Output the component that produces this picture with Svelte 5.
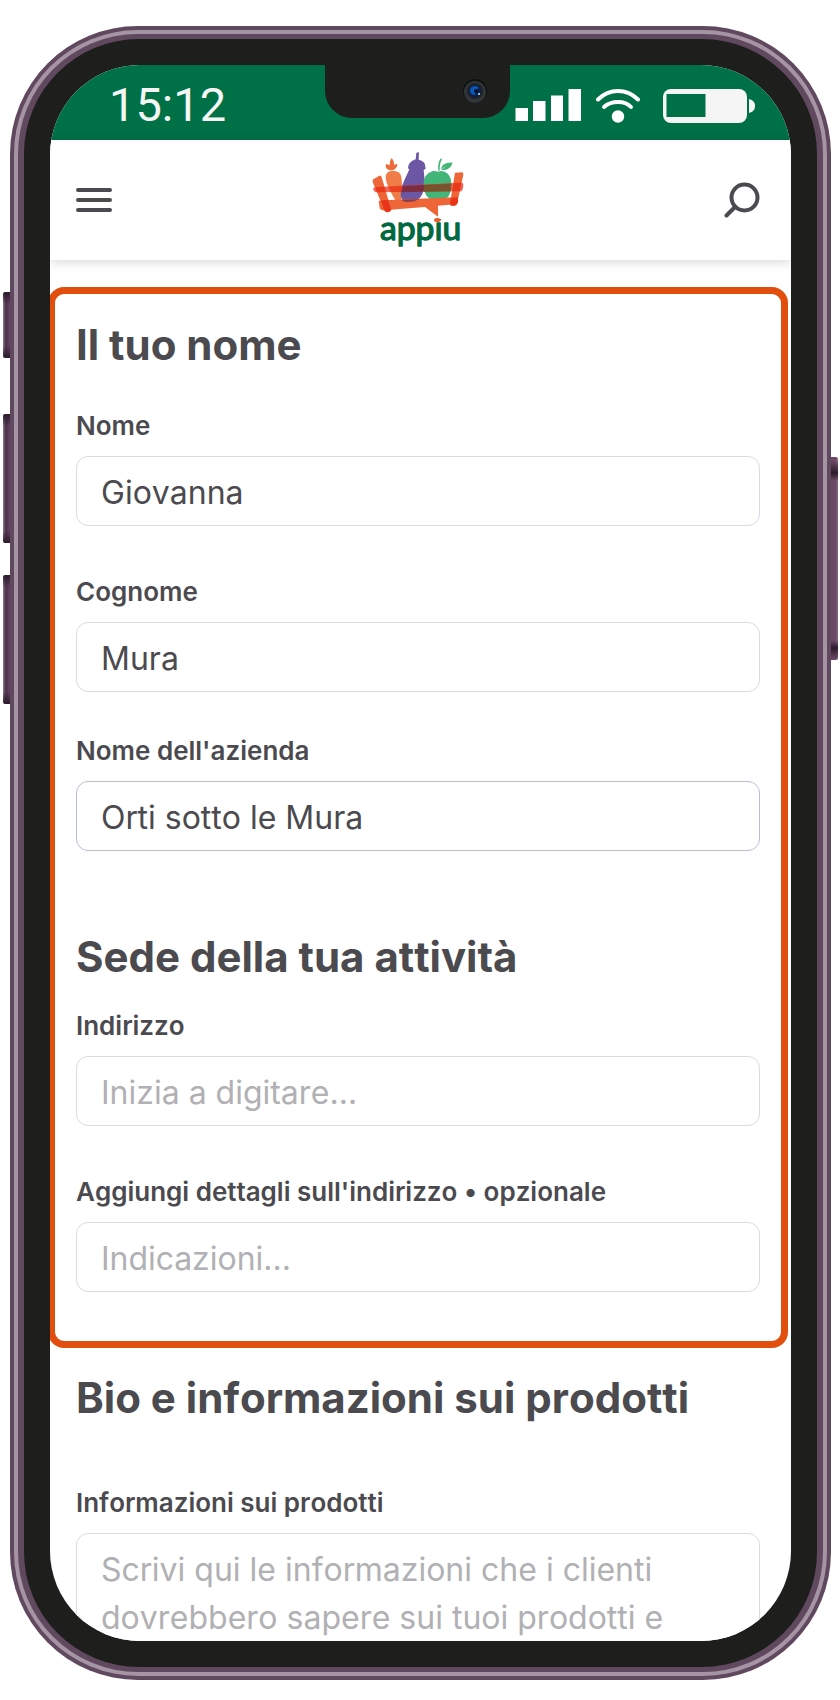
<script>
  let nome = $state('Giovanna');
  let cognome = $state('Mura');
  let azienda = $state('Orti sotto le Mura');
  let indirizzo = $state('');
  let dettagli = $state('');
  let info = $state('');
</script>

<div class="page">
  <div class="phone">
    <span class="key key-mute"></span>
    <span class="key key-up"></span>
    <span class="key key-down"></span>
    <span class="key key-power"></span>
    <div class="rim">
      <div class="edge">
        <div class="bezel">
          <div class="screen">
            <div class="status">
              <span class="time">15:12</span>
              <div class="notch">
                <svg class="camera" width="24" height="24" viewBox="0 0 24 24" aria-hidden="true">
                  <circle cx="12" cy="12" r="12" fill="#0e0f11" />
                  <circle cx="12" cy="13" r="11" fill="#323537" />
                  <circle cx="12" cy="12" r="8" fill="#202326" />
                  <circle cx="12" cy="12" r="6" fill="#06204f" />
                  <path d="M7 12a5 5 0 0 1 9-3l-3 2-1 5a5 5 0 0 1-5-4z" fill="#0b57b5" />
                  <circle cx="13" cy="12" r="2" fill="#051023" />
                  <circle cx="16" cy="15" r="1" fill="#d6e6ff" />
                </svg>
              </div>
              <svg class="signal" width="66" height="34" viewBox="0 0 66 34" aria-hidden="true">
                <path d="M.5 19h12.500v13H.5zM18 12h12.500v20H18zM36 6.500h12v25.500H36zM53.500 0H66v32H53.500z" fill="#fff" />
              </svg>
              <svg class="wifi" width="44" height="34" viewBox="0 0 44 34" aria-hidden="true">
                <g fill="none" stroke="#fff" stroke-width="4" stroke-linecap="round">
                  <path d="M2 10.500Q10.500 2 22 2t20 8.500" />
                  <path d="M8 18q5.500-5 14-5t13 5" />
                </g>
                <circle cx="22" cy="27.500" r="6.200" fill="#fff" />
              </svg>
              <svg class="battery" width="92" height="34" viewBox="0 0 92 34" aria-hidden="true">
                <rect width="84" height="34" rx="8" fill="#f5f5f5" />
                <path d="M3.500 5h39v23h-39z" fill="#007047" />
                <path d="M86 10q6 1.500 6 7t-6 7z" fill="#f5f5f5" />
              </svg>
            </div>

            <header>
              <button class="icon" aria-label="Menu">
                <svg width="36" height="36" viewBox="0 0 36 36">
                  <path d="M2 8h32M2 18h32M2 28h32" stroke="#4b4a4f" stroke-width="4" stroke-linecap="round" />
                </svg>
              </button>
              <a class="logo" href="#home">
                <svg width="96" height="100" viewBox="60 30 288 300">
                  <!-- carrot -->
                  <path d="M107 112q0-19 21-20 23 0 26 18 4 24-1 76-3 14-8 7-16-20-28-48-10-20-10-33z" fill="#f07d47" />
                  <path d="M124 91q-17-2-17-14-2-5 5-4l8 3q-3-10 5-22 9 12 7 22l7-4q5-1 3 3-3 13-15 16z" fill="#ec6b3b" />
                  <!-- aubergine -->
                  <path d="M199 38l8-1-1 22q17 4 19 15l2 12-6 4q5 28 1 54-6 42-46 42-26-1-24-27 4-27 15-47 7-14 11-24l-4-3q0-20 23-27z" fill="#6c57a5" />
                  <!-- apple -->
                  <path d="M264 95q16-6 29 6 12 11 11 36-1 45-41 46-39-2-43-46 1-38 29-44 9-1 15 2z" fill="#43b578" />
                  <path d="M265 92q-3-24 8-37l3 3q-8 14-7 34z" fill="#43b578" />
                  <path d="M272 89q4-23 36-21-8 25-34 22l14-13z" fill="#43b578" />
                  <text x="90" y="299">appiu</text>
                  <path d="M252 214h26v24h-26z" fill="#fff" />
                  <!-- crate -->
                  <path d="M70 118l18-11q5-1 7 5l29 97q-5 9-16 7-4-2-6-8L68 126q-1-5 2-8zM315 98l20-1q6 0 5 7l-19 88q-3 6-10 5-11 1-11-6l14-87z" fill="#ee6637" />
                  <path d="M86 183q7-3 16-2l210-9q11-1 12 5 3 9-3 15l-57 5v33l-39-29-122 10q-10 1-14-6z" fill="#ee6637" />
                  <path d="M69 146q2-5 13-5l245-13q11-1 13 4 1 13-5 22L82 157q-10 0-13-11z" fill="#e72810" opacity=".7" />
                  <path d="M159 138l65-3q-1 10-3 20l-67 2z" fill="#6c2b43" opacity=".8" />
                  <path d="M222 135l82-4-3 23-79 1z" fill="#70542f" opacity=".9" />
                  <path d="M93 181l21-1 10 30q-5 9-16 6-5-3-7-9zM303 174l21-2q1 12-3 20-3 6-13 5-10 0-8-7z" fill="#e72410" opacity=".75" />
                  <path d="M154 179l53-2q-12 9-32 9-15 0-21-7z" fill="#713451" opacity=".8" />
                  <ellipse cx="262" cy="240" rx="10" ry="6" fill="#ea5b27" />
                </svg>
              </a>
              <button class="icon" aria-label="Cerca">
                <svg width="36" height="36" viewBox="0 0 36 36">
                  <circle cx="20.500" cy="15.500" r="13" fill="none" stroke="#4b4a4f" stroke-width="4" />
                  <path d="M11 25l-8.500 8.500" stroke="#4b4a4f" stroke-width="4" stroke-linecap="round" />
                </svg>
              </button>
            </header>

            <form>
              <section class="highlight">
                <h2>Il tuo nome</h2>
                <div class="field first">
                  <label for="nome">Nome</label>
                  <input id="nome" type="text" bind:value={nome} />
                </div>
                <div class="field">
                  <label for="cognome">Cognome</label>
                  <input id="cognome" type="text" bind:value={cognome} />
                </div>
                <div class="field company">
                  <label for="azienda">Nome dell'azienda</label>
                  <input id="azienda" class="active" type="text" bind:value={azienda} />
                </div>

                <h2 class="next">Sede della tua attività</h2>
                <div class="field address">
                  <label for="indirizzo">Indirizzo</label>
                  <input id="indirizzo" type="text" placeholder="Inizia a digitare..." bind:value={indirizzo} />
                </div>
                <div class="field">
                  <label for="dettagli">Aggiungi dettagli sull'indirizzo • opzionale</label>
                  <input id="dettagli" type="text" placeholder="Indicazioni..." bind:value={dettagli} />
                </div>
              </section>

              <section class="bio">
                <h2>Bio e informazioni sui prodotti</h2>
                <div class="field">
                  <label for="info">Informazioni sui prodotti</label>
                  <textarea id="info" rows="4" placeholder="Scrivi qui le informazioni che i clienti dovrebbero sapere sui tuoi prodotti e" bind:value={info}></textarea>
                </div>
              </section>
            </form>
          </div>
        </div>
      </div>
    </div>
  </div>
</div>

<style>
  :global(body) {
    background: #fff;
    font-family: Inter, sans-serif;
    font-kerning: none;
    font-feature-settings: 'calt' 0, 'liga' 0, 'ccmp' 0;
    color: #4b4a4f;
  }

  .page {
    box-sizing: border-box;
    height: 100vh;
    padding: 26px 9px 20px 10px;
  }

  .phone,
  .rim,
  .edge,
  .bezel,
  .screen {
    box-sizing: border-box;
    height: 100%;
  }

  .phone {
    position: relative;
    padding: 4px;
    border-radius: 128px;
    background: #60485f;
  }

  .rim {
    padding: 4px;
    border-radius: 124px;
    background: #a594a3;
  }

  .edge {
    padding: 5px 6px;
    border-radius: 120px;
    background: #60485f;
  }

  .bezel {
    padding: 26px;
    border-radius: 115px;
    background: #1e1e1c;
  }

  .screen {
    position: relative;
    overflow: hidden;
    border-radius: 90px;
    background: #fff;
  }

  /* hardware keys on the sides */
  .key {
    position: absolute;
    left: -7px;
    width: 7px;
    border-radius: 2px 0 0 2px;
    background:
      linear-gradient(#2c1b2c, transparent 12px, transparent calc(100% - 12px), #2c1b2c),
      linear-gradient(90deg, #8a7a88, #4a3049 40%, #664464);
  }

  .key-mute {
    top: 266px;
    height: 66px;
  }

  .key-up {
    top: 388px;
    height: 129px;
  }

  .key-down {
    top: 549px;
    height: 129px;
  }

  .key-power {
    top: 431px;
    left: auto;
    right: -7px;
    height: 203px;
    border-radius: 0 2px 2px 0;
    background:
      linear-gradient(transparent 4px, #2c1b2c 16px, transparent 24px, transparent calc(100% - 20px), #2c1b2c calc(100% - 12px), transparent),
      linear-gradient(90deg, #6d4968 70%, #857383);
  }

  .status {
    display: flex;
    align-items: center;
    box-sizing: border-box;
    height: 75px;
    padding: 7px 36px 0 59px;
    background: #007047;
  }

  .time {
    margin-right: auto;
    padding-bottom: 3px;
    font-family: Roboto, sans-serif;
    font-size: 47px;
    line-height: 56px;
    color: #f5f5f5;
  }

  .notch {
    position: absolute;
    top: 0;
    left: 50%;
    width: 185px;
    height: 53px;
    margin-left: -96px;
    border-radius: 0 0 27px 27px;
    background: #1e1e1c;
  }

  .camera {
    position: absolute;
    top: 14px;
    right: 23px;
  }

  .wifi {
    margin: 0 23px 0 15px;
  }

  header {
    display: flex;
    align-items: center;
    justify-content: space-between;
    height: 120px;
    padding: 0 31px 0 26px;
    background: #fff;
    box-shadow: 0 2px 10px rgba(0, 0, 0, 0.16);
  }

  .icon {
    padding: 0;
    border: 0;
    background: none;
    cursor: pointer;
  }

  .icon svg,
  .logo svg {
    display: block;
  }

  .logo text {
    font-family: Lato, sans-serif;
    font-size: 101px;
    font-weight: 400;
    fill: #00693f;
    stroke: #00693f;
    stroke-width: 4px;
    stroke-linejoin: round;
  }

  .highlight {
    margin: 27px 3px 0 -2px;
    padding: 26px 21px 49px;
    border: 7px solid #e24e0e;
    border-radius: 16px;
  }

  .bio {
    padding: 25px 31px 0 26px;
  }

  h2 {
    margin: 0;
    font-size: 42px;
    line-height: 50px;
    font-weight: 700;
  }

  h2.next {
    margin-top: 81px;
  }

  .field {
    display: flex;
    flex-direction: column;
    gap: 14px;
    margin-top: 50px;
  }

  .field.first {
    margin-top: 40px;
  }

  .field.company {
    margin-top: 43px;
  }

  .field.address {
    margin-top: 28px;
  }

  .bio .field {
    margin-top: 64px;
  }

  label {
    font-size: 26px;
    line-height: 32px;
    font-weight: 600;
  }

  input,
  textarea {
    box-sizing: border-box;
    width: 100%;
    margin: 0;
    border: 1px solid #d8dbe8;
    border-radius: 12px;
    outline: none;
    background: #fff;
    font-family: inherit;
    font-size: 32px;
    font-kerning: none;
    font-feature-settings: inherit;
    color: #4b4a4f;
  }

  input {
    height: 70px;
    padding: 2px 24px 0;
  }

  input.active {
    border-color: #b9bfd6;
  }

  textarea {
    padding: 12px 24px;
    line-height: 48px;
    resize: none;
  }

  ::placeholder {
    color: #b1b0b4;
    opacity: 1;
  }
</style>
